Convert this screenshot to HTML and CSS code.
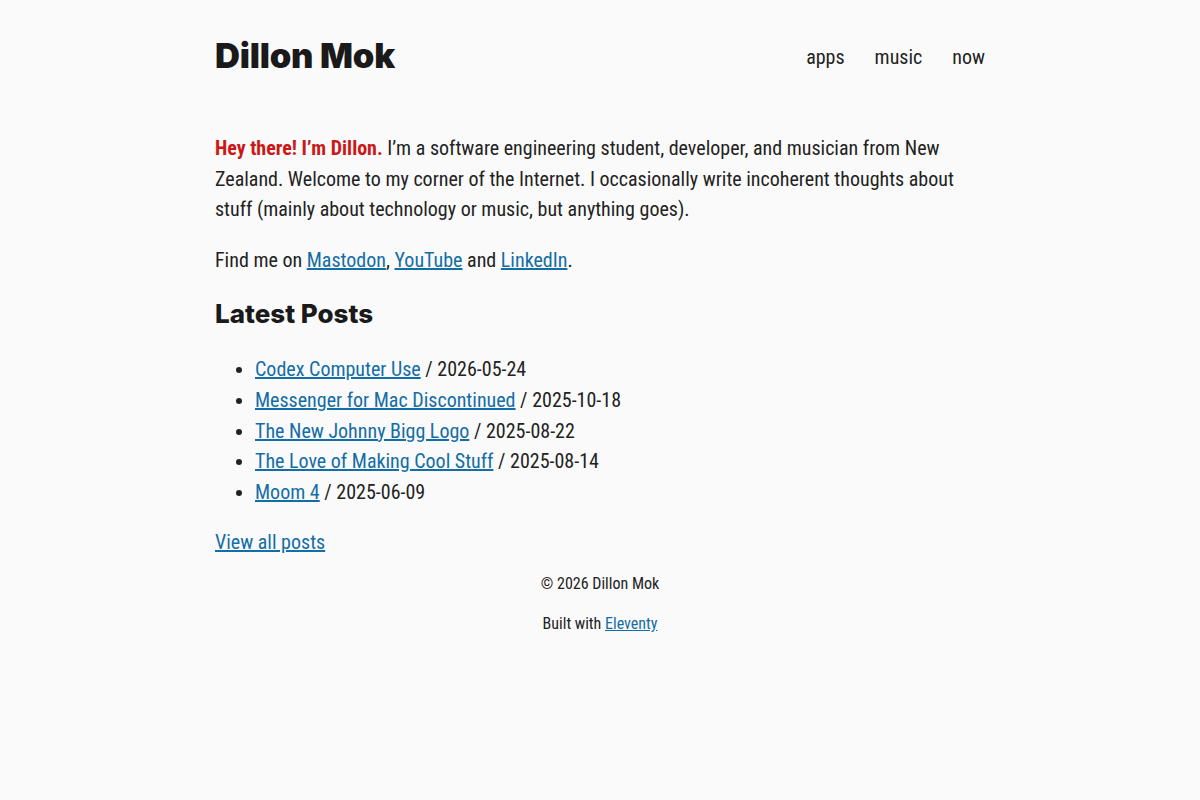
FILE: index.html
```html
<!DOCTYPE html>
<html lang="en">

<head>
    <meta charset="UTF-8">
    <meta name="viewport" content="width=device-width, initial-scale=1.0">
    <title>Dillon Mok</title>
    <link rel="stylesheet" href="styles.css">
</head>

<body>
    <div class="wrapper">
        <header class="site-header">
            <a class="site-title" href="#">Dillon Mok</a>
            <nav class="site-nav">
                <a href="#">apps</a>
                <a href="#">music</a>
                <a href="#">now</a>
            </nav>
        </header>

        <main class="content">
            <p><strong class="hello">Hey there! I’m Dillon.</strong> I’m a software engineering student, developer, and musician from New Zealand. Welcome to my corner of the Internet. I occasionally write incoherent thoughts about stuff (mainly about technology or music, but anything goes).</p>
            <p>Find me on <a href="#">Mastodon</a>, <a href="#">YouTube</a> and <a href="#">LinkedIn</a>.</p>

            <h2>Latest Posts</h2>
            <ul class="posts">
                <li><a href="#">Codex Computer Use</a> / 2026-05-24</li>
                <li><a href="#">Messenger for Mac Discontinued</a> / 2025-10-18</li>
                <li><a href="#">The New Johnny Bigg Logo</a> / 2025-08-22</li>
                <li><a href="#">The Love of Making Cool Stuff</a> / 2025-08-14</li>
                <li><a href="#">Moom 4</a> / 2025-06-09</li>
            </ul>

            <p class="more"><a href="#">View all posts</a></p>
        </main>

        <footer class="site-footer">
            <p>© 2026 Dillon Mok</p>
            <p>Built with <a href="#">Eleventy</a></p>
        </footer>
    </div>
</body>

</html>
```
FILE: styles.css
```css
* {
    box-sizing: border-box;
}

body {
    margin: 0;
    background: #fafafa;
    color: #222;
    font-family: Roboto, "Open Sans", sans-serif;
    font-stretch: 78%;
    font-size: 20px;
    line-height: 30.5px;
}

a {
    color: #136da6;
}

.wrapper {
    width: 770px;
    margin: 0 auto;
}

/* header */
.site-header {
    display: flex;
    justify-content: space-between;
    align-items: center;
    padding-top: 36px;
}

.site-title {
    font-family: Inter, Roboto, sans-serif;
    font-stretch: normal;
    font-weight: 900;
    font-size: 34.5px;
    line-height: 40px;
    color: #1a1a1a;
    text-decoration: none;
    letter-spacing: -0.2px;
}

.site-nav {
    display: flex;
    gap: 30px;
    margin-top: 2px;
}

.site-nav a {
    color: #222;
    text-decoration: none;
}

/* main */
.content {
    margin-top: 57px;
}

.content p {
    margin: 0 0 20px;
}

.hello {
    color: #cc1717;
    font-weight: 700;
}

.content h2 {
    font-family: Inter, Roboto, sans-serif;
    font-stretch: normal;
    font-weight: 800;
    font-size: 26px;
    line-height: 30px;
    color: #1a1a1a;
    margin: 24px 0 25px;
}

.posts {
    margin: 0 0 19px;
    padding-left: 40px;
    line-height: 30.75px;
}

.content p.more {
    margin-bottom: 0;
}

/* footer */
.site-footer {
    text-align: center;
    font-size: 16px;
    line-height: 25px;
    padding-top: 14px;
}

.site-footer p {
    margin: 0 0 15px;
}
```
